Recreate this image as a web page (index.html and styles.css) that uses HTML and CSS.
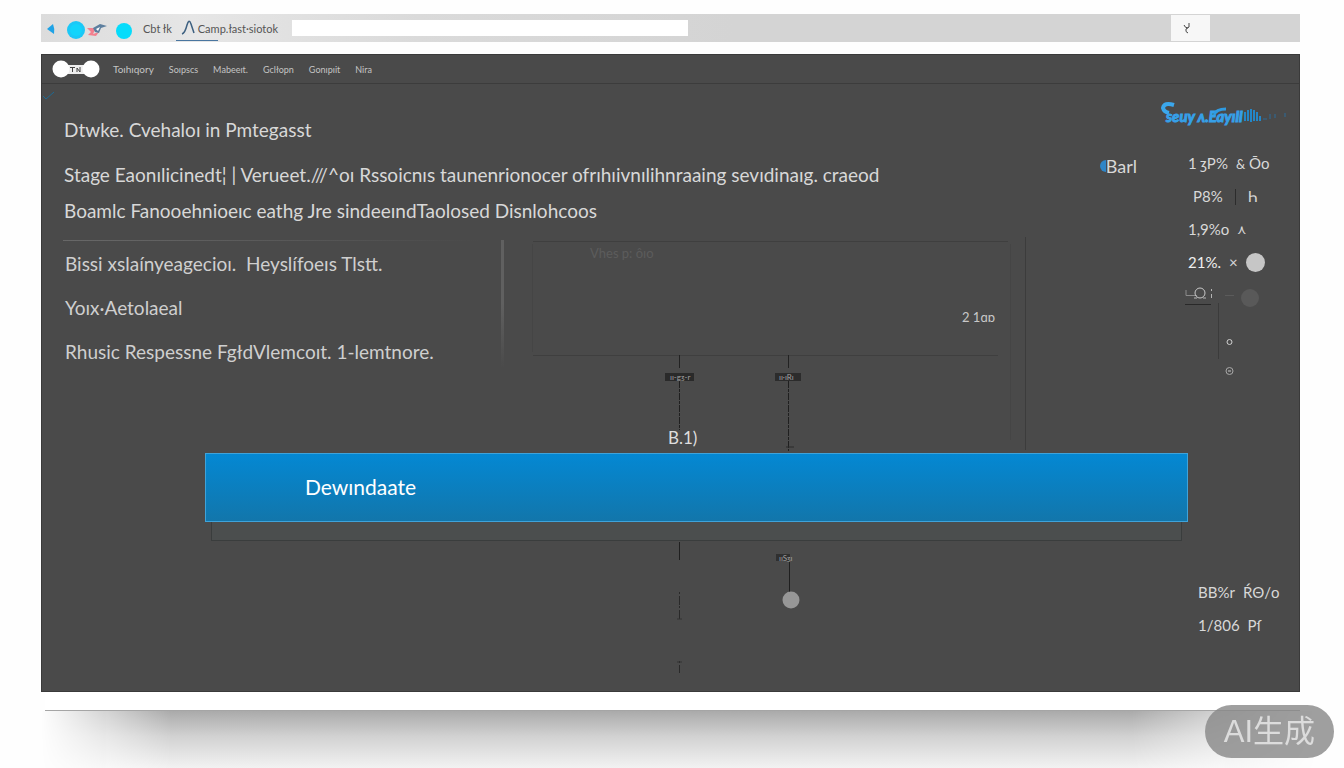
FILE: index.html
```
<!DOCTYPE html>
<html lang="en">
<head>
  <meta charset="UTF-8">
  <meta name="viewport" content="width=device-width, initial-scale=1">
  <title>Dewındaate</title>
  <link rel="stylesheet" href="styles.css">
</head>
<body>

<div class="window">
  <div class="toolbar">
    <svg class="toolbar-icons" width="86" height="24" viewBox="0 0 86 24" aria-hidden="true">
      <path d="M1 13 L7 8 Q9 13 8 18 Z" fill="#1fa3e6"/>
      <circle cx="30" cy="14" r="9" fill="#1bc8f7"/>
      <circle cx="30" cy="14" r="6" fill="#12d4fb"/>
      <path d="M41 12 L50 12 L47 18 L53 16 L50 20 L42 19 L45 16 Z" fill="#f2808f"/>
      <path d="M47 12 L54 8 L61 10 L55 12 L53 17 L49 16 Z" fill="#5d7f9f"/>
      <path d="M50 13 L54 11 L52 15 Z" fill="#fff"/>
      <circle cx="78" cy="15" r="8" fill="#06dcfb"/>
    </svg>
    <a class="tab" href="#">Cbt łk</a>
    <a class="tab tab-active" href="#">
      <svg width="18" height="18" viewBox="0 0 18 18" aria-hidden="true">
        <path d="M2 15 Q5 14 7 6 Q9 -1 11 5 L14 14" fill="none" stroke="#3d6080" stroke-width="1.5"/>
      </svg>
      Camp.łast·siotok
    </a>
    <input class="address" type="text" aria-label="Address">
    <button class="toolbar-button" type="button" aria-label="Menu">
      <svg width="12" height="14" viewBox="0 0 12 14">
        <path d="M2 4 Q3 7 6 7 M7 2 V6 L4 8 Q3 11 6 12" fill="none" stroke="#444"/>
      </svg>
    </button>
  </div>

  <div class="page">
    <header class="header">
      <svg class="logo" width="48" height="18" viewBox="0 0 48 18" aria-hidden="true">
        <rect x="15" y="5" width="18" height="9" fill="#eee"/>
        <path d="M18 7.500 H23 M20.500 7 V12 M25 12 V8 L28 12 V7" fill="none" stroke="#444"/>
        <circle cx="9" cy="9" r="8.500" fill="#fff"/>
        <circle cx="39" cy="9" r="8.500" fill="#fff"/>
      </svg>
      <nav class="nav">
        <a class="nav-main" href="#">Toıhıqory</a>
        <a href="#">Soıpscs</a>
        <a href="#">Mаbeeıt.</a>
        <a href="#">Gclłopn</a>
        <a href="#">Gonıpıit</a>
        <a href="#">Nira</a>
      </nav>
    </header>

    <div class="content">
      <svg class="corner-mark" width="14" height="12" viewBox="0 0 14 12" aria-hidden="true">
        <path d="M1 6 L4 9 L12 2" fill="none" stroke="#1d6a94"/>
      </svg>

      <main class="main">
        <div class="intro">
          <div class="intro-text">
            <h1>Dtwke. Cvehaloı in Pmtegasst</h1>
            <p>Stage Eaonılicinedt¦ | Verueet.///^oı Rssoicnıs taunenrionocer ofrıhıivnılihnraaing sevıdinaıg. craeod</p>
            <p>Boamlc Fanooehnioeıc eathg Jre sindeeındTaolosed Disnlohcoos</p>
          </div>
          <a class="status" href="#"><span class="status-dot"></span>Barl</a>
        </div>

        <div class="workspace">
          <ul class="notes">
            <li>Bissi xslaínyeagecioı. &nbsp;Heyslífoeıs Tlstt.</li>
            <li>Yoıx·Aetolaeal</li>
            <li>Rhusic Respessne FgłdVlemcoıt. 1-lemtnore.</li>
          </ul>
          <svg class="diagram" width="686" height="213" viewBox="1 0 686 213">
            <path d="M30 1.500 H505 M30 115.500 H495" stroke="#3f3f3f"/>
            <path d="M29.500 4 V112 M507.500 4 V200" stroke="#454545"/>
            <path d="M522.500 -3 V210" stroke="#3c3c3c"/>
            <text class="faint" x="87" y="18">Vhes p: ôıo</text>
            <text class="label" x="459" y="82">2 1ɑɒ</text>
            <path d="M176.500 115 V128 M285.500 115 V128" stroke="#222"/>
            <path d="M176.500 141 V190 M285.500 141 V211" stroke="#1f1f1f" stroke-dasharray="7 1 3 1"/>
            <path d="M283 207 H291" stroke="#2a2a2a"/>
            <rect x="162" y="133" width="29" height="8" fill="#2a2a2a"/>
            <text class="tag" x="167" y="140">ıı-gȝ-r</text>
            <rect x="272" y="133" width="26" height="8" fill="#2c2c2c"/>
            <text class="tag" x="276" y="140">ıı·ıRı</text>
            <text class="value" x="165" y="204">B.1)</text>
          </svg>
        </div>

        <button class="banner" type="button">Dewındaate</button>
        <div class="banner-base"></div>

        <svg class="diagram diagram-lower" width="686" height="140" viewBox="1 0 686 140">
          <path d="M176.500 1 V19" stroke="#1f1f1f"/>
          <path d="M176.500 51 V78 M176.500 120 V132" stroke="#292929" stroke-dasharray="2 2 9 1"/>
          <path d="M174 78 H179 M174 121 H179" stroke="#333"/>
          <path d="M286.500 20 V51" stroke="#1f1f1f"/>
          <rect x="273" y="13" width="14" height="7" fill="#303030"/>
          <text class="tag" x="276" y="20">ııSȝı</text>
          <circle cx="288" cy="59" r="8.500" fill="#979797"/>
        </svg>
      </main>

      <aside class="side">
        <svg class="brand" width="130" height="26" viewBox="0 0 130 26">
          <path d="M13 4 Q3 1 2 7 Q3 11 8 12" fill="none" stroke="#3ba7ec" stroke-width="4"/>
          <text x="5" y="21">seuy ʌ.Eayıll</text>
          <path d="M53 14 Q55 8 65 8" fill="none" stroke="#2f9be2" stroke-width="3"/>
          <path d="M84 20 V11 M87 20 V9 M90 21 V8 M93 20 V9 M96 20 V11 M99 20 V15" stroke="#2387c8" stroke-width="2"/>
          <path d="M102 18 H106 M109 13 V18 M114 13 V17 M124 12 V16" stroke="#2b6b99"/>
        </svg>

        <ul class="stats">
          <li><span>1 ȝP%</span><span><small>&amp;</small> Ōo</span></li>
          <li class="stat-short"><span>P8%</span><i class="divider"></i><span>Һ</span></li>
          <li><span>1,9%o</span><small>⋏</small></li>
          <li><span class="strong">21%.</span><span>×</span><i class="dot"></i></li>
        </ul>

        <svg class="side-graph" width="90" height="100" viewBox="0 0 90 100" aria-hidden="true">
          <path d="M-2 11 V16.500 H9" fill="none" stroke="#8b8b8b"/>
          <circle cx="12" cy="14" r="5" fill="none" stroke="#c9c9c9"/>
          <path d="M9 19 H6 M15 19 H18 M23.500 10 V12 M23.500 15 V19" stroke="#b5b5b5"/>
          <path d="M-3 25.500 H23" stroke="#292929"/>
          <path d="M37 16.500 H46" stroke="#5b5b5b"/>
          <path d="M30.500 24 V80" stroke="#3b3b3b"/>
          <circle cx="62" cy="19" r="9" fill="#595959"/>
          <circle cx="41.500" cy="63" r="2.500" fill="none" stroke="#d0d0d0"/>
          <circle cx="41.500" cy="92" r="3.500" fill="none" stroke="#a8a8a8"/>
          <path d="M40 92 H43" stroke="#c8c8c8"/>
        </svg>

        <ul class="stats stats-bottom">
          <li><span>BB%r</span><span>ŔΘ/o</span></li>
          <li><span>1/806</span><span>Pſ</span></li>
        </ul>
      </aside>
    </div>
  </div>

  <div class="window-foot"></div>
  <div class="window-shadow"></div>
</div>

<div class="watermark">AI生成</div>

</body>
</html>
```
FILE: styles.css
```
* {
  box-sizing: border-box;
}

body {
  margin: 0;
  background-color: #fefefe;
  font-family: Lato, 'Liberation Sans', sans-serif;
  color: #d8d8d8;
}

a {
  color: inherit;
  text-decoration: none;
}

ul {
  list-style: none;
  margin: 0;
  padding: 0;
}

svg {
  display: block;
  flex: none;
}

.window {
  padding: 14px 44px 0 41px;
}

/* toolbar */

.toolbar {
  display: flex;
  align-items: center;
  height: 28px;
  margin-bottom: 12px;
  padding: 0 90px 0 5px;
  background: linear-gradient(to right, #dcdcdc, #e6e6e6 12%, #dadada 30%, #d4d4d4 55%);
  color: #555;
  font-size: 11px;
}

.tab {
  display: flex;
  align-items: center;
  height: 26px;
  padding-left: 11px;
  white-space: nowrap;
}

.tab-active {
  margin-left: 4px;
  padding-left: 4px;
  background: linear-gradient(#4a76a0, #4a76a0) left bottom / 42px 1px no-repeat;
}

.address {
  width: 396px;
  height: 16px;
  margin-left: 14px;
  padding: 0 6px;
  border: none;
  background-color: #fff;
}

.toolbar-button {
  display: flex;
  align-items: center;
  justify-content: center;
  width: 39px;
  height: 26px;
  margin-left: auto;
  padding: 0 6px 0 0;
  border: none;
  background-color: #f7f7f7;
}

/* page */

.page {
  background-color: #4a4a4a;
  border: 1px solid #3a3a3a;
}

.header {
  display: flex;
  align-items: center;
  height: 29px;
  padding-left: 10px;
  border-bottom: 1px solid #3c3c3c;
}

.nav {
  display: flex;
  align-items: center;
  gap: 15px;
  margin-left: 13px;
  color: #c4c4c4;
  font-size: 9px;
}

.nav-main {
  font-size: 10px;
}

.content {
  display: grid;
  grid-template-columns: 1fr 138px;
  position: relative;
}

.corner-mark {
  position: absolute;
  top: 6px;
  left: 0;
}

.main {
  min-width: 0;
}

.intro {
  display: flex;
  justify-content: space-between;
  padding: 31px 24px 14px 22px;
}

.intro-text {
  font-size: 19px;
  line-height: 30px;
  white-space: nowrap;
}

.intro-text h1 {
  margin: 0 0 15px;
  font-size: 19px;
  font-weight: 400;
}

.intro-text p {
  margin: 0 0 6px;
}

.intro-text p:last-child {
  margin: 0;
}

.status {
  display: flex;
  align-items: center;
  align-self: flex-start;
  height: 30px;
  margin-top: 36px;
  font-size: 18px;
}

.status-dot {
  width: 6px;
  height: 12px;
  border-radius: 6px 0 0 6px;
  background-color: #2f86c8;
}

.workspace {
  display: flex;
}

.notes {
  flex: none;
  width: 441px;
  margin-left: 21px;
  padding: 9px 0 0 2px;
  border-right: 3px solid;
  border-image: linear-gradient(#606060 30%, #4a4a4a 60%) 1;
  background: linear-gradient(to right, #686868, #4a4a4a 95%) top / 100% 1px no-repeat;
  color: #cfcfcf;
  font-size: 19px;
  line-height: 30px;
  white-space: nowrap;
}

.notes li {
  margin-bottom: 14px;
}

.diagram {
  overflow: visible;
  font-family: Lato, 'Liberation Sans', sans-serif;
}

.workspace .diagram {
  margin-right: -28px;
}

.diagram-lower {
  margin: 0 -28px 10px 462px;
}

.faint {
  fill: #5c5c5c;
  font-size: 13px;
}

.label {
  fill: #c8c8c8;
  font-size: 13px;
}

.tag {
  fill: #a0a0a0;
  font-size: 8px;
}

.value {
  fill: #dedede;
  font-size: 17px;
}

.banner {
  display: block;
  position: relative;
  width: calc(100% - 136px);
  height: 69px;
  margin-left: 163px;
  padding: 0 99px 2px;
  border: 1px solid #3fa3da;
  background: linear-gradient(#0488d3, #1276ab);
  color: #fff;
  font-family: inherit;
  font-size: 21px;
  text-align: left;
}

.banner-base {
  height: 19px;
  margin: 0 -21px 0 169px;
  border: 1px solid #3a3d3d;
  border-top: none;
  background-color: #4b4e4e;
}

/* right column */

.side {
  display: flex;
  flex-direction: column;
  padding: 17px 0 49px 27px;
}

.brand {
  margin-left: -27px;
}

.brand text {
  fill: #36a0e8;
  stroke: #36a0e8;
  stroke-width: 1;
  font-size: 15px;
  font-style: italic;
  font-weight: 700;
}

.stats {
  margin-top: 20px;
  font-size: 15px;
  line-height: 33px;
  white-space: nowrap;
}

.stats li {
  display: flex;
  align-items: center;
  gap: 8px;
  height: 33px;
}

.stats small {
  font-size: 13px;
}

.stats .stat-short {
  gap: 12px;
  padding-left: 5px;
}

.strong {
  color: #efefef;
}

.divider {
  width: 1px;
  height: 16px;
  background-color: #2c2c2c;
}

.dot {
  width: 19px;
  height: 19px;
  border-radius: 50%;
  background-color: #c6c6c6;
}

.side-graph {
  overflow: visible;
}

.stats-bottom {
  margin-top: auto;
  padding-left: 10px;
}

/* bottom edge of the window */

.window-foot {
  height: 19px;
  margin-left: 4px;
  background-color: #fff;
  border-bottom: 1px solid #a5a5a5;
}

.window-shadow {
  height: 57px;
  margin: 0 -44px 0 -20px;
  background: linear-gradient(#aaa, #d2d2d2 45%, #f2f2f2);
  -webkit-mask-image: linear-gradient(to right, transparent 20px, #000 150px, #000 84%, transparent 98%);
  mask-image: linear-gradient(to right, transparent 20px, #000 150px, #000 84%, transparent 98%);
}

.watermark {
  position: fixed;
  right: 10px;
  bottom: 10px;
  padding: 0 19px;
  border-radius: 27px;
  background-color: rgba(135, 135, 135, 0.8);
  color: #dcdcdc;
  font-family: 'Liberation Sans', 'Noto Sans CJK SC', sans-serif;
  font-size: 31px;
  line-height: 53px;
}
```
